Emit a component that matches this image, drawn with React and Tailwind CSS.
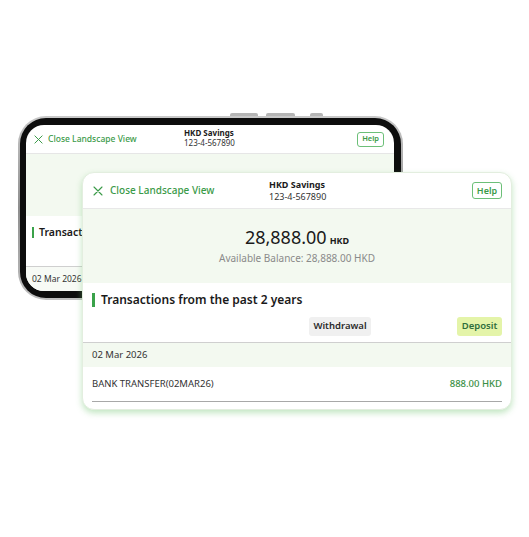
import React from "react";

const XIcon = ({ size = 10, className = "" }) => (
  <svg width={size} height={size} viewBox="0 0 10 10" className={className} fill="none">
    <path d="M1 1L9 9M9 1L1 9" stroke="currentColor" strokeWidth="1.1" strokeLinecap="round" />
  </svg>
);

function PhoneScreen() {
  return (
    <div className="w-[368px] h-[166px] bg-white rounded-[18px] overflow-hidden flex flex-col">
      <div className="h-[29px] shrink-0 flex items-center justify-between px-[8px] border-b border-[#e6e6e6] relative">
        <div className="flex items-center gap-[5px] text-[#3a9a48] text-[8.5px] font-medium">
          <XIcon size={9} />
          <span>Close Landscape View</span>
        </div>
        <div className="absolute left-[158px] top-[3px] flex flex-col leading-[10px]">
          <span className="text-[8px] font-bold text-[#1a1a1a]">HKD Savings</span>
          <span className="text-[8px] text-[#333]">123-4-567890</span>
        </div>
        <div className="mr-[2px] h-[15px] px-[4px] flex items-center border border-[#6cbf78] rounded-[3px] text-[7.5px] font-semibold text-[#3a9a48]">
          Help
        </div>
      </div>
      <div className="h-[62px] shrink-0 bg-[#f3f9f0]"></div>
      <div className="h-[51px] shrink-0 border-b border-[#cfcfcf] pt-[9px] pl-[6px] flex items-start">
        <div className="flex items-center gap-[5px]">
          <div className="w-[2px] h-[11px] bg-[#3aa24a]"></div>
          <span className="text-[10.5px] font-semibold text-[#1a1a1a]">Transactions from the past 2 years</span>
        </div>
      </div>
      <div className="flex-1 bg-[#f7faf5] pl-[6px] pt-[6px] text-[8.5px] text-[#333]">02 Mar 2026</div>
    </div>
  );
}

function Card() {
  return (
    <div className="absolute left-[82px] top-[172px] w-[430px] h-[238px] bg-white rounded-[12px] border border-[#e3eedf] shadow-[0_3px_6px_rgba(120,200,120,0.45)] overflow-hidden flex flex-col">
      <div className="h-[36px] shrink-0 flex items-center justify-between pl-[10px] pr-[9px] border-b border-[#e8e8e8] relative">
        <div className="flex items-center gap-[7px] text-[#3a9a48] text-[10px] font-medium">
          <XIcon size={10} />
          <span>Close Landscape View</span>
        </div>
        <div className="absolute left-[186px] top-[6px] flex flex-col">
          <span className="text-[9px] leading-[12px] font-bold text-[#1a1a1a]">HKD Savings</span>
          <span className="text-[9px] leading-[11px] text-[#333]">123-4-567890</span>
        </div>
        <div className="h-[17px] w-[30px] flex items-center justify-center border border-[#6cbf78] rounded-[3px] text-[9px] font-semibold text-[#3a9a48]">
          Help
        </div>
      </div>
      <div className="h-[74px] shrink-0 bg-[#f3f9f0] flex flex-col items-center pt-[17px]">
        <div className="flex items-baseline gap-[3px] text-[#1a1a1a]">
          <span className="text-[18px] leading-[22px]">28,888.00</span>
          <span className="text-[9px] font-bold">HKD</span>
        </div>
        <div className="text-[10px] text-[#8a8a8a] mt-[3px]">Available Balance: 28,888.00 HKD</div>
      </div>
      <div className="h-[60px] shrink-0 border-b border-[#cfcfcf] px-[9px] pt-[9px] flex flex-col">
        <div className="flex items-center gap-[6px]">
          <div className="w-[3px] h-[14px] bg-[#3aa24a]"></div>
          <span className="text-[12px] font-semibold text-[#1a1a1a] leading-[16px]">Transactions from the past 2 years</span>
        </div>
        <div className="flex mt-[9px]">
          <div className="ml-[217px] h-[19px] w-[62px] flex items-center justify-center bg-[#f0f0f0] rounded-[3px] text-[9.5px] font-semibold text-[#2a2a2a]">
            Withdrawal
          </div>
          <div className="ml-auto h-[19px] w-[45px] flex items-center justify-center bg-[#e4f4a9] rounded-[3px] text-[9.5px] font-semibold text-[#2f6e3c]">
            Deposit
          </div>
        </div>
      </div>
      <div className="h-[24px] shrink-0 bg-[#f3f9f0] flex items-center px-[9px] text-[9.5px] text-[#333]">02 Mar 2026</div>
      <div className="mx-[9px] h-[35px] shrink-0 flex items-center justify-between border-b border-[#a8a8a8] text-[9.5px]">
        <span className="text-[#333]">BANK TRANSFER(02MAR26)</span>
        <span className="text-[#3a8f45] font-medium">888.00 HKD</span>
      </div>
    </div>
  );
}

export default function App() {
  return (
    <div className="w-[529px] h-[537px] bg-white relative overflow-hidden" style={{ fontFamily: '"Noto Sans", "Open Sans", sans-serif' }}>
      <div className="pt-[113px] pl-[18px]">
        <div className="relative w-[385px]">
          <div className="flex h-[3px] relative">
            <div className="absolute left-[212px] top-0 w-[28px] h-[4px] bg-[#b5b5b5] rounded-t-[2px]"></div>
            <div className="absolute left-[248px] top-0 w-[29px] h-[4px] bg-[#b5b5b5] rounded-t-[2px]"></div>
            <div className="absolute left-[292px] top-0 w-[13px] h-[4px] bg-[#b5b5b5] rounded-t-[2px]"></div>
          </div>
          <div className="relative w-[385px] h-[184px] rounded-[28px] bg-gradient-to-b from-[#c9c9c9] via-[#8e8e8e] to-[#c0c0c0] p-[2px]">
            <div className="w-full h-full rounded-[26px] bg-[#0d0d0d] p-[6px] pt-[7px]">
              <PhoneScreen />
            </div>
          </div>
        </div>
      </div>
      <Card />
    </div>
  );
}
